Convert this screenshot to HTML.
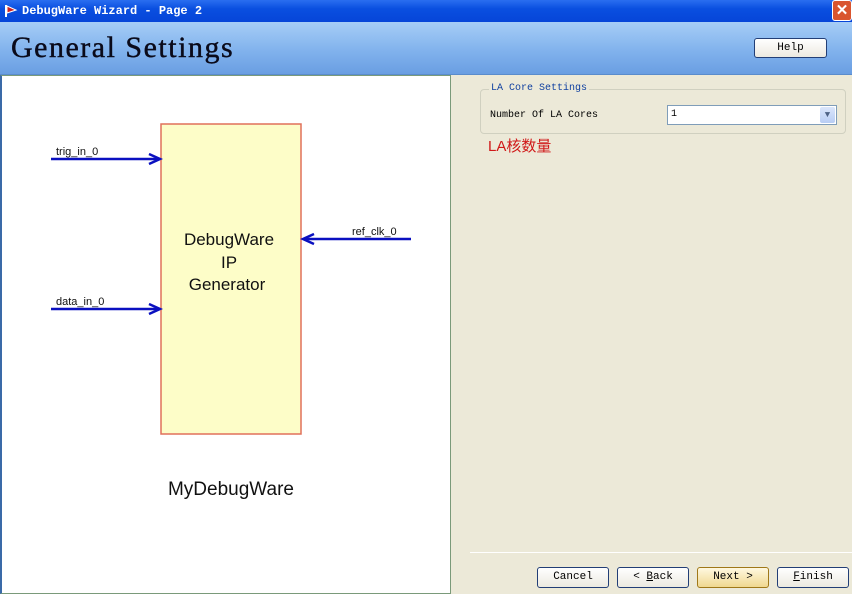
<!DOCTYPE html>
<html><head><meta charset="utf-8"><style>
*{margin:0;padding:0;box-sizing:border-box}
body{width:852px;height:594px;overflow:hidden;position:relative;background:#ece9d8;font-family:"Liberation Mono",monospace}
.title{position:absolute;left:0;top:0;width:852px;height:22px;background:linear-gradient(#2a6ef0,#0a4fe0 40%,#0645d8);color:#fff;font:bold 12px "Liberation Mono",monospace;line-height:22px;padding-left:22px}
.close{position:absolute;right:0;top:0;width:20px;height:21px;background:#d9552f;border:1px solid #fff;border-radius:3px;color:#fff;font:bold 15px "Liberation Sans",sans-serif;text-align:center;line-height:19px}
.hdr{position:absolute;left:0;top:22px;width:852px;height:53px;background:linear-gradient(#a6cdf6,#7eb0ec 60%,#6a9ee2);border-bottom:1px solid #5a8ccc}
.hdr h1{position:absolute;left:11px;top:9px;font:30px "Liberation Serif",serif;color:#0a0a1a;letter-spacing:1.5px;-webkit-text-stroke:0.4px #0a0a1a}
.btn{position:absolute;height:21px;border:1px solid #223e76;border-radius:3px;background:linear-gradient(#fff,#ece9e0);font:11px "Liberation Mono",monospace;text-align:center;line-height:19px;color:#000}
.left{position:absolute;left:0;top:75px;width:451px;height:519px;background:#fff;border:1px solid #7a9a7a;border-left:2px solid #3a6aa8}
.grp{position:absolute;left:480px;top:89px;width:366px;height:45px;border:1px solid #d0d0c0;border-radius:4px}
.grp .lg{position:absolute;left:8px;top:-7px;background:#ece9d8;padding:0 2px;color:#1040a0;font-size:10px}
.sep{position:absolute;left:470px;top:552px;width:382px;height:1px;background:#a0a090;border-bottom:1px solid #fff}
</style></head><body>
<div class="title"><svg style="position:absolute;left:4px;top:4px" width="14" height="14"><path d="M2 1 L2 13" stroke="#fff" stroke-width="2"/><path d="M3 2 L12 6 L3 9Z" fill="#d02020" stroke="#fff"/></svg>DebugWare Wizard - Page 2</div>
<div class="close">✕</div>
<div class="hdr"><h1>General Settings</h1>
<div class="btn" style="left:754px;top:16px;width:73px;height:20px">Help</div></div>
<div class="left">
<svg width="449" height="517" style="position:absolute;left:0;top:0">
<rect x="159" y="48" width="140" height="310" fill="#fdfdc8" stroke="#e0705a" stroke-width="1.5"/>
<g stroke="#0a10c0" stroke-width="2.5" fill="none">
<line x1="49" y1="83" x2="158" y2="83"/><path d="M147 78 L158 83 L147 88"/>
<line x1="49" y1="233" x2="158" y2="233"/><path d="M147 228 L158 233 L147 238"/>
<line x1="409" y1="163" x2="301" y2="163"/><path d="M312 158 L301 163 L312 168"/>
</g>
<g font-family="Liberation Sans,sans-serif" fill="#111">
<text x="54" y="79" font-size="11">trig_in_0</text>
<text x="54" y="229" font-size="11">data_in_0</text>
<text x="350" y="159" font-size="11">ref_clk_0</text>
<text x="227" y="169" font-size="17" text-anchor="middle">DebugWare</text>
<text x="227" y="192" font-size="17" text-anchor="middle">IP</text>
<text x="225" y="214" font-size="17" text-anchor="middle">Generator</text>
<text x="229" y="419" font-size="19" text-anchor="middle">MyDebugWare</text>
</g></svg></div>
<div class="grp"><span class="lg">LA Core Settings</span>
<div style="position:absolute;left:9px;top:20px;font-size:10px">Number Of LA Cores</div>
<div style="position:absolute;left:186px;top:15px;width:170px;height:20px;background:#fff;border:1px solid #7f9db9;font-size:10px;line-height:18px;padding-left:3px">1
<div style="position:absolute;right:1px;top:1px;width:15px;height:16px;background:linear-gradient(#dbe6fb,#b8cdf4);border-radius:2px;color:#4d6185;font-size:9px;text-align:center;line-height:16px">▼</div></div></div>
<div style="position:absolute;left:488px;top:135px;color:#d01818;font:15px 'Liberation Sans','Noto Sans CJK SC',sans-serif">LA核数量</div>
<div class="sep"></div>
<div class="btn" style="left:537px;top:567px;width:72px">Cancel</div>
<div class="btn" style="left:617px;top:567px;width:72px">&lt; <u>B</u>ack</div>
<div class="btn" style="left:697px;top:567px;width:72px;border-color:#a07818;background:linear-gradient(#fff8e0,#f0d890)">Next &gt;</div>
<div class="btn" style="left:777px;top:567px;width:72px"><u>F</u>inish</div>
</body></html>
